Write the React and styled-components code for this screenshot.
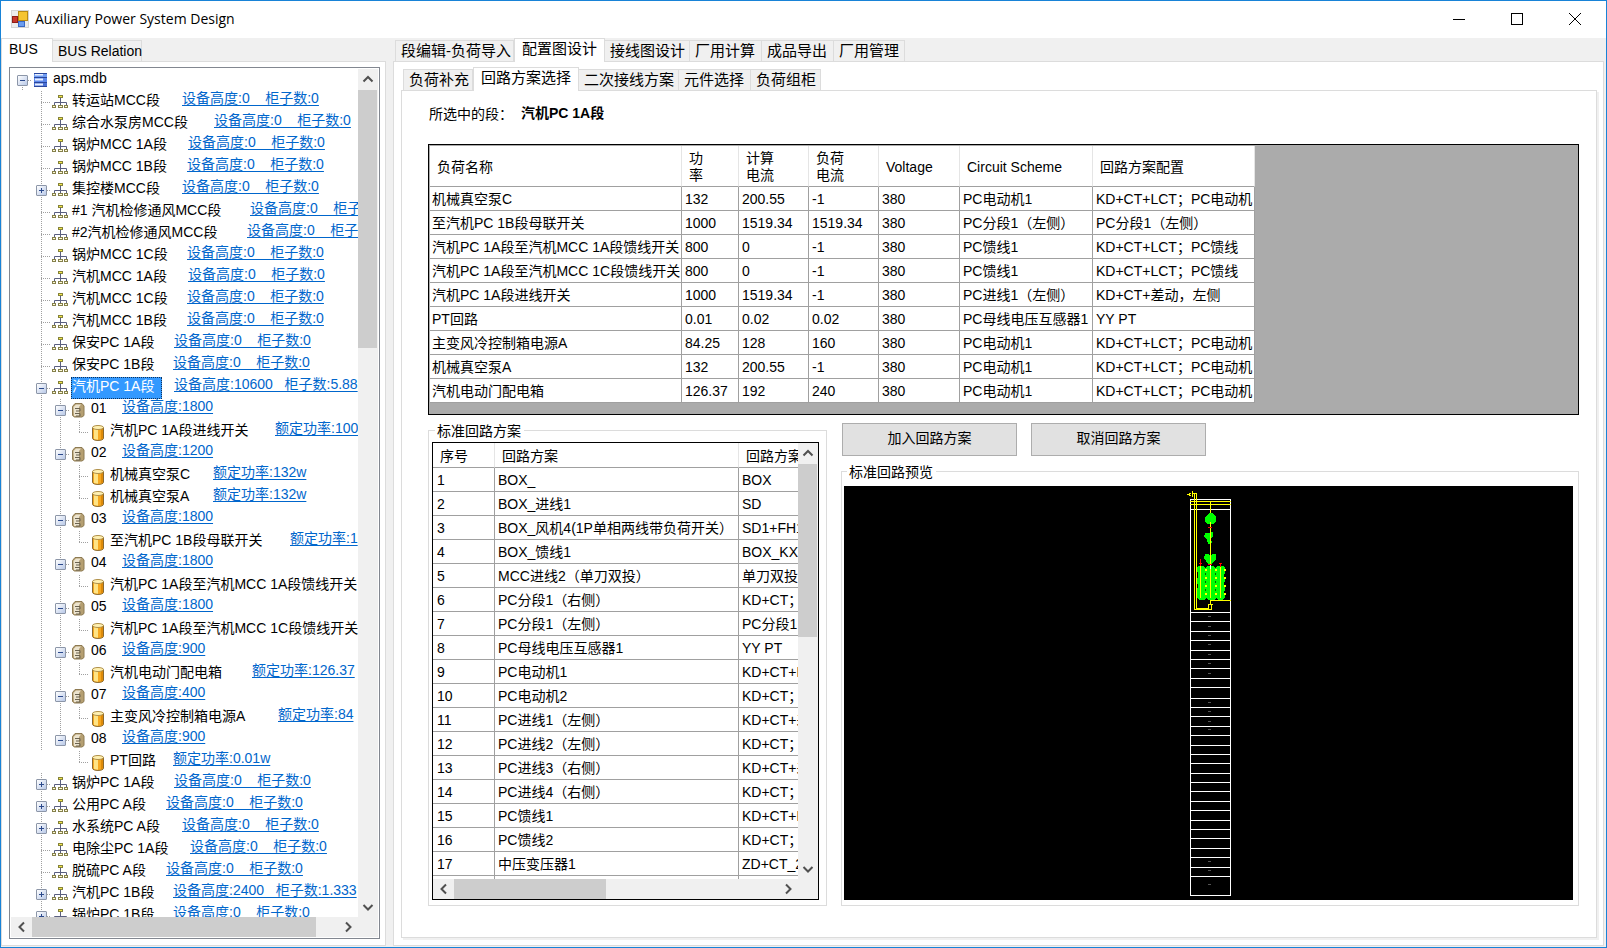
import React from "react";
import styled, { createGlobalStyle, css } from "styled-components";

const GlobalStyle = createGlobalStyle`
  *, *::before, *::after { box-sizing: border-box; }
  body { margin: 0; }
  body, button { font-family: "Liberation Sans", "Noto Sans CJK SC", sans-serif; font-size: 14px; color: #000; }
`;

const LINE = "#dcdcdc";
const FACE = "#f0f0f0";

/* ---------- window frame ---------- */

const Window = styled.div`
  height: 100vh;
  display: flex;
  flex-direction: column;
  border: 1px solid #1883d7;
  background: ${FACE};
  overflow: hidden;
`;

const TitleBar = styled.header`
  flex: none;
  height: 37px;
  display: flex;
  align-items: center;
  padding: 0 2px 2px 10px;
  background: #fff;
`;

const Title = styled.h1`
  flex: 1;
  margin: 0 0 0 6px;
  font: 400 14px/20px "Open Sans", "Noto Sans", sans-serif;
`;

const CaptionButton = styled.button`
  width: 58px;
  height: 35px;
  padding: 0;
  border: 0;
  background: none;
  display: flex;
  align-items: center;
  justify-content: center;
`;

const Workspace = styled.main`
  flex: 1;
  min-height: 0;
  display: grid;
  grid-template-columns: 385px minmax(0, 1fr);
  column-gap: 7px;
  padding: 0 2px 1px 0;
`;

/* ---------- tab control ---------- */

const TabControl = styled.section`
  min-width: 0;
  min-height: 0;
  flex: 1;
  display: flex;
  flex-direction: column;
`;

const TabStrip = styled.div`
  flex: none;
  height: 23px;
  display: flex;
  align-items: flex-end;
  padding-left: ${(p) => (p.$flush ? 0 : 2)}px;
`;

const Tab = styled.button`
  flex: none;
  width: ${(p) => p.$width}px;
  height: 21px;
  padding: 0 0 0 5px;
  border: 1px solid ${LINE};
  border-bottom: 0;
  border-left-width: ${(p) => (p.$first ? 1 : 0)}px;
  background: ${FACE};
  font-size: ${(p) => p.$size}px;
  line-height: 20px;
  text-align: left;
  white-space: nowrap;
  ${(p) =>
    p["aria-selected"] &&
    css`
      position: relative;
      height: 24px;
      margin-bottom: -1px;
      padding-left: 7px;
      padding-bottom: 4px;
      border-left-width: 1px;
      background: #fff;
    `}
`;

const TabPage = styled.div`
  flex: 1;
  min-height: 0;
  display: flex;
  flex-direction: column;
  padding: ${(p) => p.$pad};
  border: 1px solid ${LINE};
  background: #fff;
  box-shadow: ${(p) => (p.$nested ? `2px 2px 0 ${FACE}` : "none")};
`;

function Tabs({ items, selected, size = 15, flush }) {
  return (
    <TabStrip role="tablist" $flush={flush}>
      {items.map(([label, width], i) => (
        <Tab key={label} role="tab" aria-selected={label === selected} $width={width} $size={size} $first={i === 0}>
          {label}
        </Tab>
      ))}
    </TabStrip>
  );
}

/* ---------- scroll bars ---------- */

const Bar = styled.div`
  display: flex;
  flex-direction: ${(p) => (p.$vertical ? "column" : "row")};
  background: ${FACE};
  grid-area: ${(p) => (p.$vertical ? "1 / 2" : "2 / 1")};
`;

const ArrowButton = styled.button`
  flex: 0 0 21px;
  padding: 0;
  border: 0;
  background: none;
  display: flex;
  align-items: center;
  justify-content: center;
`;

const Track = styled.div`
  flex: 1;
  min-width: 0;
  min-height: 0;
`;

const Thumb = styled.div`
  background: #cdcdcd;
  width: ${(p) => (p.$vertical ? "auto" : `${p.$size}%`)};
  height: ${(p) => (p.$vertical ? `${p.$size}%` : "100%")};
  margin-right: ${(p) => (p.$vertical ? 1 : 0)}px;
`;

const ARROWS = {
  up: "M1.5 7.5 6 3 10.5 7.5",
  down: "M1.5 4 6 8.5 10.5 4",
  left: "M8 1.5 3.5 6 8 10.5",
  right: "M4 1.5 8.5 6 4 10.5",
};

const Arrow = ({ dir }) => (
  <ArrowButton aria-label={dir}>
    <svg width="12" height="12" viewBox="0 0 12 12" fill="none" stroke="#505050" strokeWidth="2">
      <path d={ARROWS[dir]} />
    </svg>
  </ArrowButton>
);

function ScrollBar({ vertical, size }) {
  return (
    <Bar $vertical={vertical}>
      <Arrow dir={vertical ? "up" : "left"} />
      <Track>
        <Thumb $vertical={vertical} $size={size} />
      </Track>
      <Arrow dir={vertical ? "down" : "right"} />
    </Bar>
  );
}

const Scroller = styled.div`
  flex: 1;
  min-height: 0;
  min-width: 0;
  display: grid;
  grid-template: minmax(0, 1fr) 20px / minmax(0, 1fr) 20px;
  padding: ${(p) => (p.$tree ? 1 : 0)}px;
  border: 1px solid ${(p) => (p.$tree ? "#828790" : "#000")};
  background: ${(p) => (p.$tree ? "#fff" : FACE)};
`;

const Viewport = styled.div`
  overflow: hidden;
  background: #fff;
`;

const Corner = styled.div`
  grid-area: 2 / 2;
  background: ${FACE};
`;

/* ---------- tree ---------- */

const TreeList = styled.ul`
  margin: 0;
  padding: 0 0 0 2px;
  list-style: none;
`;

const TreeRow = styled.li`
  height: 22px;
  display: flex;
  align-items: flex-start;
  white-space: pre;
`;

const vdots = "repeating-linear-gradient(to bottom, #a0a0a0 0 1px, transparent 1px 2px)";
const hdots = "repeating-linear-gradient(to right, #a0a0a0 0 1px, transparent 1px 2px)";
const GUIDES = {
  " ": "none",
  "|": `${vdots} 9px 0 / 1px 22px no-repeat`,
  t: `${vdots} 9px 0 / 1px 22px no-repeat, ${hdots} 9px 11px / 10px 1px no-repeat`,
  l: `${vdots} 9px 0 / 1px 12px no-repeat, ${hdots} 9px 11px / 10px 1px no-repeat`,
  r: `${vdots} 9px 12px / 1px 10px no-repeat, ${hdots} 9px 11px / 10px 1px no-repeat`,
};

const Guide = styled.span`
  flex: none;
  width: 19px;
  height: 22px;
  padding: 6px 0 0 4px;
  background: ${(p) => GUIDES[p.$kind]};
`;

const Expander = styled.button`
  display: block;
  width: 11px;
  height: 11px;
  padding: 0;
  border: 1px solid #8c96a8;
  border-radius: 1px;
  background:
    linear-gradient(#2c4a8c, #2c4a8c) center / 5px 1px no-repeat,
    ${(p) => (p.$open ? "" : "linear-gradient(#2c4a8c, #2c4a8c) center / 1px 5px no-repeat,")}
    linear-gradient(135deg, #fff, #b9c9e8);
`;

const NodeIcon = styled.span`
  flex: none;
  width: 19px;
  height: 22px;
  padding-top: 4px;
  svg { display: block; }
`;

const Label = styled.span`
  flex: none;
  min-width: ${(p) => p.$width}px;
  padding-left: 2px;
  line-height: 18px;
`;

const SelectedText = styled.span`
  display: block;
  width: 91px;
  height: 22px;
  margin-left: -1px;
  border: 1px dotted #10335a;
  background: #3399ff;
  color: #fff;
  line-height: 16px;
`;

const InfoLink = styled.a`
  flex: none;
  margin-left: 2px;
  color: #0066cc;
  line-height: 14px;
  text-decoration: underline;
  text-underline-offset: 2px;
`;

const ICONS = {
  db: (
    <svg width="16" height="16" viewBox="0 0 16 16">
      <rect x="2" y="0" width="13" height="4" fill="#6f9bf2" />
      <rect x="2" y="5" width="13" height="4" fill="#5b86ea" />
      <rect x="2" y="10" width="13" height="4" fill="#4a70d4" />
      <path d="M3 1.500h8M3 6.500h8M3 11.500h8" stroke="#e8f0ff" strokeWidth="2" />
      <path d="M2 .5h13M2 4.500h13M2 9.500h13M2 13.500h13" stroke="#2a479c" />
    </svg>
  ),
  bus: (
    <svg width="18" height="16" viewBox="0 0 18 16" fill="none">
      <path d="M9.500 3v7M3.500 10V7.500h12V10" stroke="#5a5f80" />
      <path d="M7 1.500h5" stroke="#85823a" strokeWidth="3" />
      <path d="M1 11.500h4M7 11.500h5M13 11.500h4" stroke="#85804a" strokeWidth="3" />
      <path d="M8 1.500h3" stroke="#f2e64a" />
      <path d="M2 11.500h2M8 11.500h3M14 11.500h2" stroke="#fffbd8" />
    </svg>
  ),
  cabinet: (
    <svg width="16" height="16" viewBox="0 0 16 16">
      <path d="M2.500 3.500 5 .5h7L14 3v9.500l-2 1.500H4.500l-2-1.500z" fill="#b59f72" stroke="#8d7a52" />
      <path d="M3.500 4 6 1.500h5L9 4v9H4z" fill="#ece4cf" />
      <path d="M5 5.500h5v2.500H6M5 10.500h5V13H6" fill="none" stroke="#6b6350" />
    </svg>
  ),
  drum: (
    <svg width="16" height="16" viewBox="0 0 16 16">
      <path d="M3.500 2.500v10.700c0 3 11 3 11 0V2.500z" fill="#f6a820" stroke="#8a6a30" />
      <path d="M5 3h4v11.700l-4-.7z" fill="#ffe484" />
      <path d="M12 3h2v10.500l-2 1z" fill="#dd8a0a" />
      <ellipse cx="9" cy="2.500" rx="5.500" ry="2" fill="#fff0b0" stroke="#b0904a" />
    </svg>
  ),
};

const zero = "设备高度:0    柜子数:0";
/* guides, icon, label, label box width, link text, expander state */
const NODES = [
  ["r", "db", "aps.mdb", 60, "", "open"],
  [" t", "bus", "转运站MCC段", 110, zero],
  [" t", "bus", "综合水泵房MCC段", 142, zero],
  [" t", "bus", "锅炉MCC 1A段", 116, zero],
  [" t", "bus", "锅炉MCC 1B段", 115, zero],
  [" t", "bus", "集控楼MCC段", 110, zero, "closed"],
  [" t", "bus", "#1 汽机检修通风MCC段", 178, zero],
  [" t", "bus", "#2汽机检修通风MCC段", 175, zero],
  [" t", "bus", "锅炉MCC 1C段", 115, zero],
  [" t", "bus", "汽机MCC 1A段", 116, zero],
  [" t", "bus", "汽机MCC 1C段", 115, zero],
  [" t", "bus", "汽机MCC 1B段", 115, zero],
  [" t", "bus", "保安PC 1A段", 102, zero],
  [" t", "bus", "保安PC 1B段", 101, zero],
  [" t", "bus", "汽机PC 1A段", 102, "设备高度:10600   柜子数:5.88", "open", true],
  [" |t", "cabinet", "01", 31, "设备高度:1800", "open"],
  [" ||l", "drum", "汽机PC 1A段进线开关", 165, "额定功率:100"],
  [" |t", "cabinet", "02", 31, "设备高度:1200", "open"],
  [" ||t", "drum", "机械真空泵C", 103, "额定功率:132w"],
  [" ||l", "drum", "机械真空泵A", 103, "额定功率:132w"],
  [" |t", "cabinet", "03", 31, "设备高度:1800", "open"],
  [" ||l", "drum", "至汽机PC 1B段母联开关", 180, "额定功率:1"],
  [" |t", "cabinet", "04", 31, "设备高度:1800", "open"],
  [" ||l", "drum", "汽机PC 1A段至汽机MCC 1A段馈线开关", 240, ""],
  [" |t", "cabinet", "05", 31, "设备高度:1800", "open"],
  [" ||l", "drum", "汽机PC 1A段至汽机MCC 1C段馈线开关", 240, ""],
  [" |t", "cabinet", "06", 31, "设备高度:900", "open"],
  [" ||l", "drum", "汽机电动门配电箱", 142, "额定功率:126.37"],
  [" |t", "cabinet", "07", 31, "设备高度:400", "open"],
  [" ||l", "drum", "主变风冷控制箱电源A", 168, "额定功率:84"],
  [" |l", "cabinet", "08", 31, "设备高度:900", "open"],
  ["   l", "drum", "PT回路", 63, "额定功率:0.01w"],
  [" t", "bus", "锅炉PC 1A段", 102, zero, "closed"],
  [" t", "bus", "公用PC A段", 94, zero, "closed"],
  [" t", "bus", "水系统PC A段", 110, zero, "closed"],
  [" t", "bus", "电除尘PC 1A段", 118, zero],
  [" t", "bus", "脱硫PC A段", 94, zero],
  [" t", "bus", "汽机PC 1B段", 101, "设备高度:2400   柜子数:1.333", "closed"],
  [" t", "bus", "锅炉PC 1B段", 101, zero, "closed"],
];

function TreeNode({ node: [guides, icon, label, width, link, state, selected] }) {
  return (
    <TreeRow>
      {[...guides].map((kind, i) => (
        <Guide key={i} $kind={kind}>
          {state && i === guides.length - 1 && <Expander $open={state === "open"} aria-label={`${state} ${label}`} />}
        </Guide>
      ))}
      <NodeIcon>{ICONS[icon]}</NodeIcon>
      <Label $width={width}>{selected ? <SelectedText>{label}</SelectedText> : label}</Label>
      {link && <InfoLink href="#">{link}</InfoLink>}
    </TreeRow>
  );
}

/* ---------- right side ---------- */

const Heading = styled.div`
  flex: none;
  height: 53px;
  display: flex;
  gap: 8px;
  padding: 13px 0 0 1px;
  line-height: 20px;
  strong { line-height: 18px; }
`;

const GridFrame = styled.div`
  flex: none;
  height: 271px;
  overflow: hidden;
  padding: 1px 0 0 1px;
  border: 1px solid #000;
  background: #ababab;
`;

const DataTable = styled.table`
  width: ${(p) => p.$width}px;
  table-layout: fixed;
  border-collapse: separate;
  border-spacing: 0;
  background: #fff;
  white-space: nowrap;
  line-height: 17px;

  th, td {
    height: 24px;
    padding: 2px 0 0 3px;
    border-right: 1px solid #a0a0a0;
    border-bottom: 1px solid #a0a0a0;
    font-weight: 400;
    text-align: left;
    overflow: hidden;
  }
  td:first-child { padding-left: ${(p) => p.$first}px; }
  th {
    height: ${(p) => p.$head}px;
    padding-left: 7px;
    border-right-color: #e5e5e5;
    white-space: pre-line;
  }
`;

const Lower = styled.div`
  flex: 1;
  min-height: 0;
  display: grid;
  grid-template-columns: 399px minmax(0, 1fr);
  column-gap: 14px;
  padding-top: 7px;
`;

const Column = styled.div`
  min-width: 0;
  min-height: 0;
  display: flex;
  flex-direction: column;
`;

const Group = styled.fieldset`
  flex: 1;
  min-width: 0;
  min-height: 0;
  display: flex;
  margin: 0;
  padding: ${(p) => p.$pad};
  border: 1px solid ${LINE};
`;

const Legend = styled.legend`
  margin-left: 3px;
  padding: 1px 3px 0 2px;
  line-height: 16px;
`;

const Actions = styled.div`
  flex: none;
  display: flex;
  gap: 14px;
  padding: 1px 0 7px 1px;
`;

const PushButton = styled.button`
  width: 175px;
  height: 33px;
  padding: 0 0 6px;
  border: 1px solid #adadad;
  background: #e1e1e1;
`;

const Preview = styled.div`
  flex: 1;
  min-width: 0;
  display: flex;
  justify-content: center;
  align-items: center;
  background: #000;
`;

const LOAD_HEAD = [
  ["负荷名称", 252], ["功\n率", 57], ["计算\n电流", 70], ["负荷\n电流", 70],
  ["Voltage", 81], ["Circuit Scheme", 133], ["回路方案配置", 162],
];
const MOTOR = "KD+CT+LCT；PC电动机";
const LOADS = [
  ["机械真空泵C", "132", "200.55", "-1", "380", "PC电动机1", MOTOR],
  ["至汽机PC 1B段母联开关", "1000", "1519.34", "1519.34", "380", "PC分段1（左侧）", "PC分段1（左侧）"],
  ["汽机PC 1A段至汽机MCC 1A段馈线开关", "800", "0", "-1", "380", "PC馈线1", "KD+CT+LCT；PC馈线"],
  ["汽机PC 1A段至汽机MCC 1C段馈线开关", "800", "0", "-1", "380", "PC馈线1", "KD+CT+LCT；PC馈线"],
  ["汽机PC 1A段进线开关", "1000", "1519.34", "-1", "380", "PC进线1（左侧）", "KD+CT+差动，左侧"],
  ["PT回路", "0.01", "0.02", "0.02", "380", "PC母线电压互感器1", "YY PT"],
  ["主变风冷控制箱电源A", "84.25", "128", "160", "380", "PC电动机1", MOTOR],
  ["机械真空泵A", "132", "200.55", "-1", "380", "PC电动机1", MOTOR],
  ["汽机电动门配电箱", "126.37", "192", "240", "380", "PC电动机1", MOTOR],
];

const SCHEME_HEAD = [["序号", 62], ["回路方案", 244], ["回路方案", 180]];
const SCHEMES = [
  ["BOX_", "BOX"],
  ["BOX_进线1", "SD"],
  ["BOX_风机4(1P单相两线带负荷开关）", "SD1+FH1"],
  ["BOX_馈线1", "BOX_KX"],
  ["MCC进线2（单刀双投）", "单刀双投"],
  ["PC分段1（右侧）", "KD+CT；"],
  ["PC分段1（左侧）", "PC分段1"],
  ["PC母线电压互感器1", "YY PT"],
  ["PC电动机1", "KD+CT+L"],
  ["PC电动机2", "KD+CT；"],
  ["PC进线1（左侧）", "KD+CT+差"],
  ["PC进线2（左侧）", "KD+CT；"],
  ["PC进线3（右侧）", "KD+CT+差"],
  ["PC进线4（右侧）", "KD+CT；"],
  ["PC馈线1", "KD+CT+L"],
  ["PC馈线2", "KD+CT；"],
  ["中压变压器1", "ZD+CT_2"],
].map((row, i) => [String(i + 1), ...row]);
SCHEMES.push(["", "", ""]);

function Table({ head, rows, headHeight, firstPad }) {
  return (
    <DataTable $width={head.reduce((sum, [, w]) => sum + w, 0)} $head={headHeight} $first={firstPad}>
      <colgroup>
        {head.map(([, w], i) => <col key={i} width={w} />)}
      </colgroup>
      <thead>
        <tr>{head.map(([label], i) => <th key={i}>{label}</th>)}</tr>
      </thead>
      <tbody>
        {rows.map((row, r) => (
          <tr key={r}>{row.map((cell, c) => <td key={c}>{cell}</td>)}</tr>
        ))}
      </tbody>
    </DataTable>
  );
}

/* Cabinet elevation: slot lines, wiring and breaker symbols. */
const SLOTS = [
  9, 19, 122, 131, 141, 150, 160, 169, 178, 188, 197, 208, 217, 226, 236, 245, 255, 264, 273,
  283, 292, 301, 311, 320, 330, 339, 348, 358, 367, 377, 386, 405,
];
const MARKS = [126, 136, 145, 154, 164, 173, 183, 212, 221, 231, 239, 371, 380, 394];

function Elevation() {
  return (
    <svg width="44" height="406" viewBox="0 0 44 406" shapeRendering="crispEdges" fill="none">
      <path d={SLOTS.map((y) => `M3 ${y}.5h41`).join("")} stroke="#fff" />
      <path d="M3.500 9v397M43.500 9v397" stroke="#fff" />
      <path d={MARKS.map((y) => `M21 ${y}.5h3`).join("")} stroke="#555" />
      <path d="M0 4.500h3M2 3.500h2M2 5.500h2M5.500 1v6M5 3.500h5M7.500 4v115.500h17V114M9.500 3v115.500h12V114h4M3 11.500h41M3 14.500h41M23.500 11v103M23.500 110.500H44" stroke="#ff0" />
      <path d="M18 27l2-2 2-2h3l2 2 2 2v4l-2 3h-7l-2-3z" fill="#0f0" />
      <path d="M18 43h4l1-1h3v4l-2 2 1 5-2 1h-2l-1-5-3-2z" fill="#0f0" />
      <path d="M18 64h3l2 1 3-1h3v5l-3 3-1 2h-4l-2-3-2-2z" fill="#0f0" />
      <path d="M10 77l2-1h5l1 2 2-2h7l1 2 2-2h6l2 2v5l-1 3 1 4-1 4 1 5-1 4 1 4-3 3h-4l-2-2-2 2h-6l-2-2-2 2h-5l-2-3v-6l1-5-1-5 1-5z" fill="#0f0" />
      <path d="M18 80h2M28 80h2M37 80h2M18 88h2M28 88h2M37 88h2M18 96h2M28 96h2M37 96h2M18 104h2M28 104h2M37 104h2" stroke="#ff0" strokeWidth="2" />
      <path d="M18 84h1M28 84h1M18 92h1M28 92h1M18 100h1M28 100h1" stroke="#060" strokeWidth="2" />
      <path d="M13.500 75v33M23.500 32v76M33.500 74v34" stroke="#ff0" />
      <path d="M13.500 69v7M12 73.500h3M21 37.500h4M32 73.500h3M33.500 73v4M21 74.500h4" stroke="#f00" />
      <path d="M23.500 75v4" stroke="#fff" />
    </svg>
  );
}

export default function App() {
  return (
    <>
      <GlobalStyle />
      <Window>
        <TitleBar>
          <svg width="18" height="18" viewBox="0 0 18 18">
            <rect width="18" height="18" fill="#d4d4d4" />
            <rect x="1" y="1" width="16" height="16" fill="#ececec" />
            <rect x="7.500" y="1.500" width="9" height="9" fill="#f5c431" stroke="#b98a12" />
            <rect x="1.500" y="6.500" width="5" height="6" fill="#c9352a" stroke="#8f1d16" />
            <rect x="7.500" y="11.500" width="6" height="5" fill="#6b9df0" stroke="#3868c4" />
          </svg>
          <Title>Auxiliary Power System Design</Title>
          <CaptionButton aria-label="Minimize">
            <svg width="12" height="12" stroke="#000"><path d="M0 6.500h12" /></svg>
          </CaptionButton>
          <CaptionButton aria-label="Maximize">
            <svg width="12" height="12" stroke="#000" fill="none"><rect x=".5" y=".5" width="11" height="11" /></svg>
          </CaptionButton>
          <CaptionButton aria-label="Close">
            <svg width="12" height="12" stroke="#000"><path d="M0 0 12 12M12 0 0 12" /></svg>
          </CaptionButton>
        </TitleBar>

        <Workspace>
          <TabControl>
            <Tabs items={[["BUS", 52], ["BUS Relation", 89]]} selected="BUS" size={14} flush />
            <TabPage $pad="5px 5px 6px 7px">
              <Scroller $tree>
                <Viewport>
                  <TreeList>
                    {NODES.map((node, i) => <TreeNode key={i} node={node} />)}
                  </TreeList>
                </Viewport>
                <ScrollBar vertical size={32} />
                <ScrollBar size={93} />
                <Corner />
              </Scroller>
            </TabPage>
          </TabControl>

          <TabControl>
            <Tabs
              items={[["段编辑-负荷导入", 119], ["配置图设计", 91], ["接线图设计", 85], ["厂用计算", 72], ["成品导出", 72], ["厂用管理", 71]]}
              selected="配置图设计"
            />
            <TabPage $pad="5px 6px 7px 7px">
              <TabControl>
                <Tabs
                  items={[["负荷补充", 70], ["回路方案选择", 106], ["二次接线方案", 100], ["元件选择", 72], ["负荷组柜", 70]]}
                  selected="回路方案选择"
                />
                <TabPage $pad="0 17px 31px 26px" $nested>
                  <Heading>
                    <span>所选中的段：</span>
                    <strong>汽机PC 1A段</strong>
                  </Heading>
                  <GridFrame>
                    <Table head={LOAD_HEAD} rows={LOADS} headHeight={41} firstPad={2} />
                  </GridFrame>
                  <Lower>
                    <Group $pad="3px 7px 5px 3px">
                      <Legend>标准回路方案</Legend>
                      <Scroller>
                        <Viewport>
                          <Table head={SCHEME_HEAD} rows={SCHEMES} headHeight={25} firstPad={4} />
                        </Viewport>
                        <ScrollBar vertical size={44} />
                        <ScrollBar size={47} />
                        <Corner />
                      </Scroller>
                    </Group>
                    <Column>
                      <Actions>
                        <PushButton>加入回路方案</PushButton>
                        <PushButton>取消回路方案</PushButton>
                      </Actions>
                      <Group $pad="6px 5px 5px 2px">
                        <Legend>标准回路预览</Legend>
                        <Preview>
                          <Elevation />
                        </Preview>
                      </Group>
                    </Column>
                  </Lower>
                </TabPage>
              </TabControl>
            </TabPage>
          </TabControl>
        </Workspace>
      </Window>
    </>
  );
}
